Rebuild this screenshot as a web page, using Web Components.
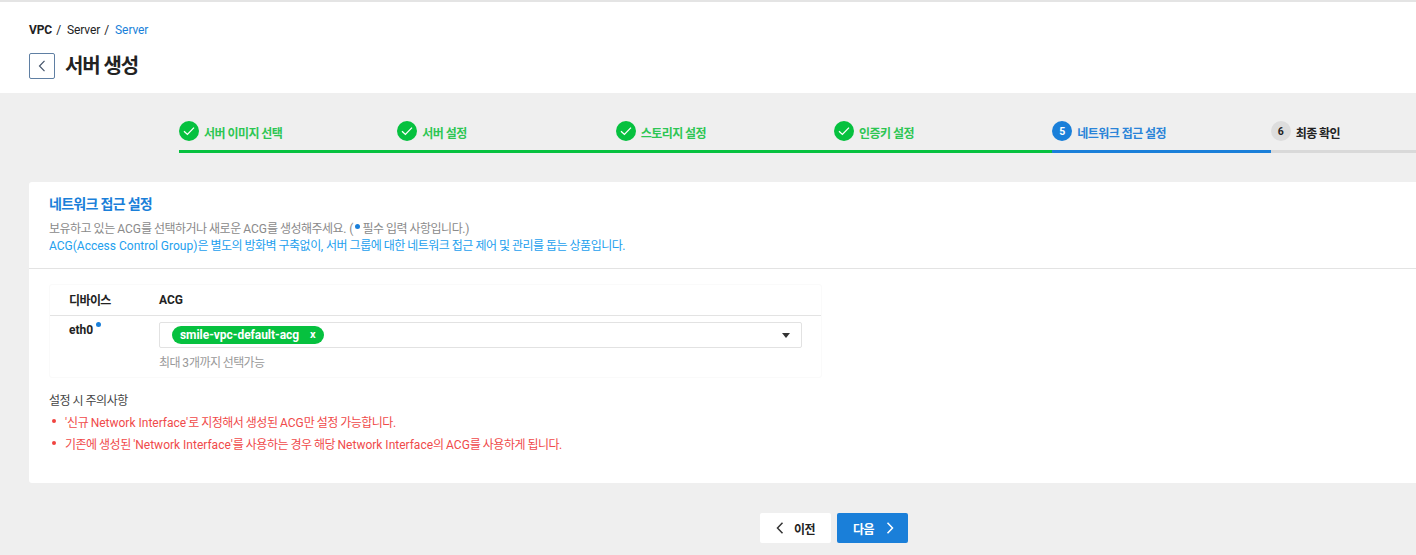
<!DOCTYPE html>
<html lang="ko"><head><meta charset="utf-8"><style>
html,body{margin:0;padding:0;height:555px;overflow:hidden;background:#efefef;font-family:Roboto,"Noto Sans CJK KR",sans-serif;color:#222}
</style></head><body>
<create-page></create-page>
<script>
const tagK=h=>h.replace(/[가-힣][가-힣 ]*/g,m=>'<span class="k">'+m+'</span>');
function def(name,css,html){customElements.define(name,class extends HTMLElement{connectedCallback(){if(this.shadowRoot)return;const s=this.attachShadow({mode:'open'});s.innerHTML='<style>.k{letter-spacing:var(--k,-.042em)}'+css+'</style>'+tagK(typeof html==='function'?html(this):html);}});}

def('page-header',`
:host{display:block;background:#fff;height:91px;border-top:2px solid #e4e4e4;padding-left:29px}
.crumb{display:flex;font-size:12px;line-height:16px;padding-top:20px;color:#222;letter-spacing:-.1px}
.crumb b{font-weight:700}.crumb i{font-style:normal;margin:0 6px 0 4px}.crumb .on{color:#1a7fd9}
.title{display:flex;align-items:center;gap:10px;margin-top:15px}
button{width:26px;height:26px;box-sizing:border-box;background:#fff;border:1px solid #5f7fa3;border-radius:2px;padding:0;display:flex;align-items:center;justify-content:center}
h1{--k:-1.1px;margin:0;font-size:20px;font-weight:700;line-height:26px;color:#222}
`,`<div class="crumb"><b>VPC</b><i>/</i><span>Server</span><i>/</i><span class="on">Server</span></div>
<div class="title"><button aria-label="Back"><svg width="8" height="12" viewBox="0 0 8 12"><path d="M6.5 .8 1.5 6l5 5.2" fill="none" stroke="#44546a" stroke-width="1.2"/></svg></button><h1>서버 생성</h1></div>`);

def('step-item',`
:host{--k:-.55px;display:flex;align-items:center;gap:5px;height:38px;box-sizing:border-box;padding-bottom:3px;border-bottom:3px solid #d9d9d9;font-size:12px;font-weight:700;color:#222;flex:0 0 218.33px}
:host([state=done]){border-color:#06c13f;color:#2dc653}
:host([state=now]){border-color:#1a7fd9;color:#2a84d8}
.c{width:20px;height:20px;border-radius:50%;background:#ddd;display:flex;align-items:center;justify-content:center;font-size:10.5px;color:#222}
.t{padding-top:3px}
:host([state=done]) .c{background:#06c13f}
:host([state=now]) .c{background:#1a7fd9;color:#fff}
`,el=>`<span class="c">${el.getAttribute('state')==='done'?'<svg width="12" height="10" viewBox="0 0 12 10"><path d="M1 5.2 4.4 8.4 11 1.6" fill="none" stroke="#fff" stroke-width="1.3"/></svg>':el.getAttribute('n')}</span><span class="t"><slot></slot></span>`);

def('step-bar',`:host{display:flex;width:1310px;margin:0 auto}`,`<slot></slot>`);

def('acg-chip',`
:host{display:inline-flex;align-items:center;height:18px;background:#06c13f;color:#fff;border-radius:9px;padding:0 8px 0 8px;font-size:12px;font-weight:700;letter-spacing:-.05px}
.x{margin-left:11px;font-size:11px;line-height:18px}
`,`<span><slot></slot></span><span class="x">x</span>`);

def('acg-select',`
:host{display:flex;align-items:center;height:26px;width:643px;box-sizing:border-box;border:1px solid #e2e2e2;border-radius:2px;background:#fff;padding:0 11px 0 12px;justify-content:space-between}
svg{display:block}
`,`<slot></slot><svg width="8" height="5" viewBox="0 0 8 5"><path d="M0 0h8L4 5z" fill="#333"/></svg>`);

def('acg-table',`
:host{--k:-.6px;display:block;width:773px;box-sizing:border-box;border:1px solid #fafafa;border-radius:3px;font-size:12px}
.head,.row{display:grid;grid-template-columns:90px 1fr;padding-left:19px}
.head{height:30px;align-items:center;border-bottom:1px solid #e3e3e3;font-weight:700;color:#222}
.head span:first-child{margin-top:-1px}
.row{padding-top:6px;height:55px}
.dev{font-weight:700;line-height:16px}
.dev i{display:inline-block;width:5px;height:5px;border-radius:50%;background:#1a7fd9;vertical-align:7px;margin-left:3px}
.note{color:#999;font-size:12px;line-height:14px;margin-top:8px}
`,`<div class="head"><span>디바이스</span><span>ACG</span></div>
<div class="row"><div class="dev">eth0<i></i></div><div><acg-select><acg-chip>smile-vpc-default-acg</acg-chip></acg-select><div class="note">최대 3개까지 선택가능</div></div></div>`);

def('notice-list',`
:host{display:block;font-size:12px;margin-top:15px}
p{margin:0;line-height:16px;color:#444}
ul{list-style:none;margin:1px 0 0;padding:0;color:#f04a4a}
li{display:flex;align-items:center;height:22px;padding-left:3px}
li::before{content:"";width:4px;height:4px;border-radius:50%;background:#f0433f;margin-right:9px}
`,`<p>설정 시 주의사항</p><ul>
<li><span>'신규 Network Interface'로 지정해서 생성된 ACG만 설정 가능합니다.</span></li>
<li><span>기존에 생성된 'Network Interface'를 사용하는 경우 해당 Network Interface의 ACG를 사용하게 됩니다.</span></li></ul>`);

def('net-card',`
:host{display:block;background:#fff;border-radius:3px;margin-top:29px;height:301px;box-sizing:border-box}
.top{height:87px;box-sizing:border-box;border-bottom:1px solid #e3e3e3;padding:14px 20px 0}
h2{--k:-.7px;margin:0;font-size:14px;line-height:17px;font-weight:700;color:#1a7fd9}
.d{font-size:12px;line-height:17px;margin-top:8px}
.g{color:#8a8a8a}.b{color:#23a0ee}
.g i{display:inline-block;width:5px;height:5px;border-radius:50%;background:#1a7fd9;vertical-align:4px;margin:0 2px}
.body{padding:15px 20px 0}
`,`<div class="top"><h2>네트워크 접근 설정</h2><div class="d"><div class="g">보유하고 있는 ACG를 선택하거나 새로운 ACG를 생성해주세요. (<i></i>필수 입력 사항입니다.)</div><div class="b">ACG(Access Control Group)은 별도의 방화벽 구축없이, 서버 그룹에 대한 네트워크 접근 제어 및 관리를 돕는 상품입니다.</div></div></div>
<div class="body"><acg-table></acg-table><notice-list></notice-list></div>`);

def('nav-btn',`
:host{display:inline-flex;align-items:center;justify-content:center;gap:10px;width:71px;height:30px;background:#fff;color:#222;border-radius:2px;font-size:12px;font-weight:700}
:host([primary]){background:#1a7fd9;color:#fff;gap:12px;box-sizing:border-box;padding-left:2px}
svg{display:block}
`,el=>{const p=el.hasAttribute('primary');const a=`<svg width="8" height="12" viewBox="0 0 8 12"><path d="${p?'M1.5 .8 6.5 6l-5 5.2':'M6.5 .8 1.5 6l5 5.2'}" fill="none" stroke="${p?'#fff':'#333'}" stroke-width="1.5"/></svg>`;return p?`<slot></slot>${a}`:`${a}<slot></slot>`;});

def('create-page',`
:host{display:block;width:1668px}
.main{padding:0 29px;width:1610px}
.steps{padding-top:22px}
.nav{display:flex;justify-content:center;gap:6px;margin-top:30px}
`,`<page-header></page-header><div class="main"><div class="steps"><step-bar>
<step-item state="done">서버 이미지 선택</step-item><step-item state="done">서버 설정</step-item><step-item state="done">스토리지 설정</step-item><step-item state="done">인증키 설정</step-item><step-item state="now" n="5">네트워크 접근 설정</step-item><step-item n="6">최종 확인</step-item>
</step-bar></div><net-card></net-card><div class="nav"><nav-btn>이전</nav-btn><nav-btn primary>다음</nav-btn></div></div>`);
</script>
</body></html>
